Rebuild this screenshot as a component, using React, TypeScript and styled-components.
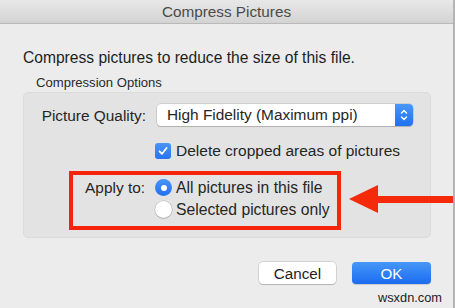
import React from "react";
import styled, { createGlobalStyle } from "styled-components";

const Global = createGlobalStyle`
  html, body { margin: 0; padding: 0; background: #ececec; }
  body { font-family: "Liberation Sans", Arial, sans-serif; color: #262626; }
`;

const Window = styled.div`
  position: relative;
  width: 455px;
  height: 308px;
  box-sizing: border-box;
  background: #ececec;
  border-right: 2px solid #b4b4b4;
  display: flex;
  flex-direction: column;
  overflow: hidden;
`;

const TitleBar = styled.div`
  height: 24px;
  flex: none;
  box-sizing: border-box;
  background: linear-gradient(#e8e8e8, #d3d3d3);
  border-bottom: 1px solid #b9b9b9;
  display: flex;
  align-items: center;
  justify-content: center;
  font-size: 15.3px;
  color: #4a4a4a;
`;

const Body = styled.div`
  display: flex;
  flex-direction: column;
  padding: 26px 22px 0 23px;
`;

const Description = styled.div`
  font-size: 15.6px;
  line-height: 16px;
  color: #1e1e1e;
`;

const Legend = styled.div`
  font-size: 13.1px;
  line-height: 14px;
  margin: 10px 0 2px 13px;
  color: #2a2a2a;
`;

const Group = styled.div`
  box-sizing: border-box;
  height: 146px;
  background: #e3e3e3;
  border: 1px solid #dcdcdc;
  border-radius: 5px;
  padding: 11px 0 0 0;
  display: flex;
  flex-direction: column;
`;

const Row = styled.div`
  display: flex;
  align-items: center;
  gap: 10px;
`;

const Label = styled.div<{ $w: number }>`
  width: ${(p) => p.$w}px;
  text-align: right;
  font-size: 15.4px;
  line-height: 17px;
  flex: none;
  white-space: nowrap;
`;

const Select = styled.div`
  width: 256px;
  height: 22px;
  box-sizing: border-box;
  background: #fff;
  border-radius: 4px;
  box-shadow: 0 0 0 0.5px rgba(0, 0, 0, 0.18), 0 1px 1px rgba(0, 0, 0, 0.15);
  display: flex;
  align-items: center;
  justify-content: space-between;
  padding-left: 10px;
  font-size: 15.4px;
  margin-left: 1px;
`;

const Stepper = styled.div`
  width: 18px;
  height: 22px;
  border-radius: 0 4px 4px 0;
  background: linear-gradient(#4b97f7, #1f71ee);
  display: flex;
  align-items: center;
  justify-content: center;
`;

const CheckRow = styled.div`
  display: flex;
  align-items: center;
  gap: 5px;
  margin: 17px 0 0 131px;
  font-size: 15.5px;
  line-height: 16px;
  white-space: nowrap;
`;

const CheckBox = styled.div`
  width: 16px;
  height: 16px;
  border-radius: 3px;
  background: linear-gradient(#4a95f7, #2674f0);
  display: flex;
  align-items: center;
  justify-content: center;
`;

const Highlight = styled.div`
  margin: 12px 0 0 45px;
  width: 272px;
  height: 59px;
  box-sizing: border-box;
  border: 4px solid #f4250a;
  padding: 4px 0 0 0;
  display: flex;
  gap: 10px;
`;

const RadioList = styled.div`
  display: flex;
  flex-direction: column;
  gap: 5px;
`;

const RadioRow = styled.div`
  display: flex;
  align-items: center;
  gap: 4px;
  font-size: 15.7px;
  line-height: 17px;
  white-space: nowrap;
`;

const Radio = styled.div<{ $on?: boolean }>`
  width: 17px;
  height: 17px;
  flex: none;
  border-radius: 50%;
  box-sizing: border-box;
  background: ${(p) => (p.$on ? "linear-gradient(#4a95f7, #2170ef)" : "#fff")};
  box-shadow: ${(p) =>
    p.$on ? "none" : "0 0 0 0.5px rgba(0,0,0,0.22), 0 1px 1px rgba(0,0,0,0.15)"};
  display: flex;
  align-items: center;
  justify-content: center;
  &::after {
    content: "";
    display: ${(p) => (p.$on ? "block" : "none")};
    width: 6px;
    height: 6px;
    border-radius: 50%;
    background: #fff;
  }
`;

const Buttons = styled.div`
  display: flex;
  justify-content: flex-end;
  gap: 16px;
  margin-top: 24px;
`;

const Button = styled.div<{ $primary?: boolean }>`
  height: 22px;
  width: ${(p) => (p.$primary ? 79 : 77)}px;
  border-radius: 4px;
  display: flex;
  align-items: center;
  justify-content: center;
  font-size: 15.2px;
  background: ${(p) => (p.$primary ? "linear-gradient(#4797f8, #1a6cf0)" : "#fff")};
  color: ${(p) => (p.$primary ? "#fff" : "#1e1e1e")};
  box-shadow: ${(p) =>
    p.$primary ? "0 1px 1px rgba(0,0,0,0.15)" : "0 0 0 0.5px rgba(0,0,0,0.2), 0 1px 1px rgba(0,0,0,0.15)"};
`;

const Arrow = styled.svg`
  position: absolute;
  left: 347px;
  top: 183px;
`;

const Watermark = styled.div`
  position: absolute;
  right: 11px;
  bottom: 3px;
  font-size: 12.8px;
  line-height: 14px;
  color: #222;
`;

export default function App() {
  return (
    <>
      <Global />
      <Window>
        <TitleBar>Compress Pictures</TitleBar>
        <Body>
          <Description>Compress pictures to reduce the size of this file.</Description>
          <Legend>Compression Options</Legend>
          <Group>
            <Row>
              <Label $w={122}>Picture Quality:</Label>
              <Select>
                <span>High Fidelity (Maximum ppi)</span>
                <Stepper>
                  <svg width="8" height="14" viewBox="0 0 8 14">
                    <path d="M1.5 5 L4 2.5 L6.5 5 M1.5 9 L4 11.5 L6.5 9" stroke="#fff" strokeWidth="1.4" fill="none" strokeLinecap="round" strokeLinejoin="round" />
                  </svg>
                </Stepper>
              </Select>
            </Row>
            <CheckRow>
              <CheckBox>
                <svg width="12" height="12" viewBox="0 0 12 12">
                  <path d="M2.5 6.3 L5 8.8 L9.6 3" stroke="#fff" strokeWidth="1.8" fill="none" strokeLinecap="round" strokeLinejoin="round" />
                </svg>
              </CheckBox>
              <span>Delete cropped areas of pictures</span>
            </CheckRow>
            <Highlight>
              <Label $w={72}>Apply to:</Label>
              <RadioList>
                <RadioRow>
                  <Radio $on />
                  <span>All pictures in this file</span>
                </RadioRow>
                <RadioRow>
                  <Radio />
                  <span>Selected pictures only</span>
                </RadioRow>
              </RadioList>
            </Highlight>
          </Group>
          <Buttons>
            <Button>Cancel</Button>
            <Button $primary>OK</Button>
          </Buttons>
        </Body>
        <Arrow width="108" height="32" viewBox="0 0 108 32">
          <polygon points="2,16 31,2 31,30" fill="#f42a0b" />
          <rect x="30" y="13" width="78" height="7" fill="#f42a0b" />
        </Arrow>
        <Watermark>wsxdn.com</Watermark>
      </Window>
    </>
  );
}
